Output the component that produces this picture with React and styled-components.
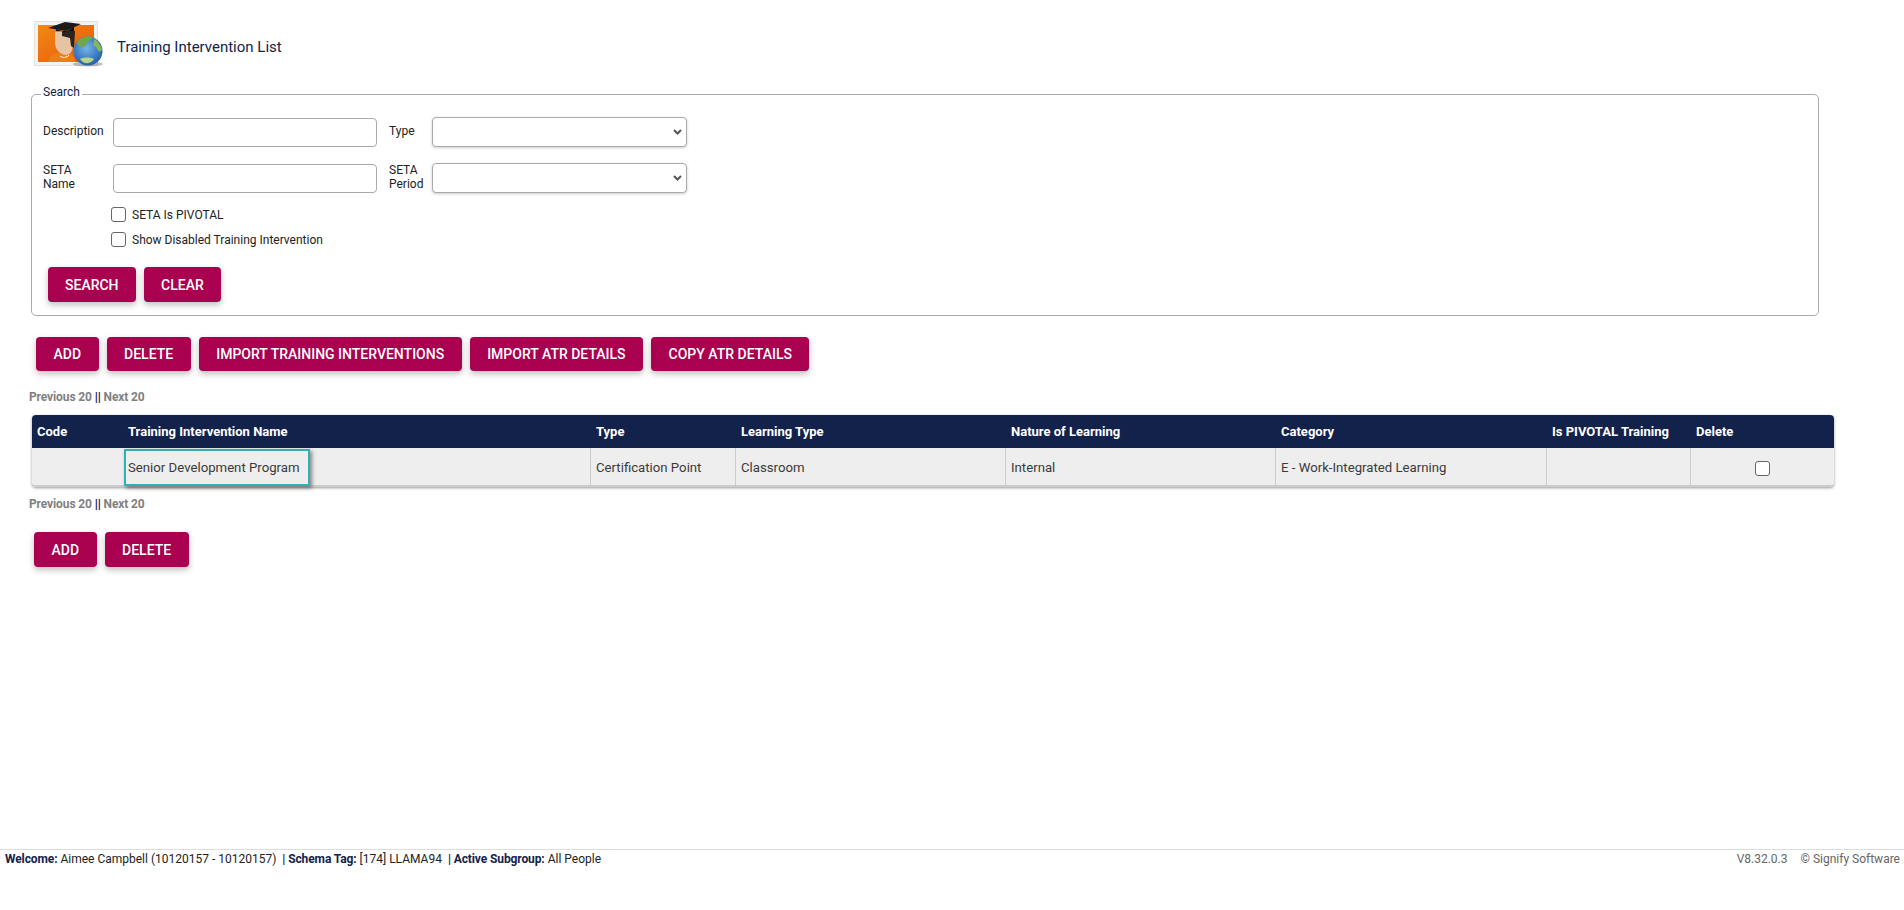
import styled, { createGlobalStyle } from "styled-components";

const GlobalStyle = createGlobalStyle`
  html, body {
    margin: 0;
    padding: 0;
    background: #fff;
    font-family: Roboto, "Liberation Sans", sans-serif;
    font-size: 12px;
    color: #222;
  }
`;

const Page = styled.div`
  min-height: 868px;
  display: flex;
  flex-direction: column;
  box-sizing: border-box;
`;

const Header = styled.div`
  display: flex;
  align-items: center;
  gap: 13px;
  padding: 20px 0 0 34px;
  height: 47px;
`;

const Title = styled.span`
  padding-top: 7px;
  font-size: 15px;
  color: #13224b;
`;

const SearchBox = styled.fieldset`
  box-sizing: border-box;
  width: 1788px;
  height: 231px;
  margin: 18px 0 0 31px;
  padding: 14px 11px 0;
  border: 1px solid #aaa;
  border-radius: 5px;
`;

const SearchLegend = styled.legend`
  padding: 0 2px 4px;
  margin-left: -2px;
  line-height: 14px;
  color: #13224b;
`;

const FieldRow = styled.div`
  display: grid;
  grid-template-columns: 70px 264px 12px 43px 255px;
  align-items: center;
  height: 30px;
  margin-bottom: ${(props) => props.$gap}px;
`;

const FieldLabel = styled.label`
  grid-column: ${(props) => props.$column};
  padding-bottom: 2px;
  line-height: 14px;
  color: #222;
`;

const TextInput = styled.input`
  box-sizing: border-box;
  height: 29px;
  width: 264px;
  border: 1px solid #aaa;
  border-radius: 4px;
  background: #fff;
`;

const SelectInput = styled.select`
  grid-column: 5;
  box-sizing: border-box;
  appearance: none;
  height: 30px;
  width: 255px;
  border: 1px solid #aaa;
  border-radius: 4px;
  background: #fff url("data:image/svg+xml,%3Csvg xmlns='http://www.w3.org/2000/svg' width='9' height='6'%3E%3Cpath d='M1 1l3.5 3.5L8 1' fill='none' stroke='%23555' stroke-width='2'/%3E%3C/svg%3E") no-repeat right 4px center;
  box-shadow: 0 1px 3px rgba(0, 0, 0, 0.2);
`;

const CheckRow = styled.div`
  display: flex;
  align-items: center;
  gap: 6px;
  height: 16px;
  margin: 0 0 9px 68px;

  & > span {
    padding-top: 2px;
  }
`;

const CheckBox = styled.input.attrs({ type: "checkbox" })`
  box-sizing: border-box;
  appearance: none;
  width: 15px;
  height: 15px;
  margin: ${(props) => props.$shift || 0}px 0 0;
  background: #fff;
  border: 1px solid #666;
  border-radius: 3px;
  vertical-align: middle;
`;

const ButtonRow = styled.div`
  display: flex;
  gap: 8px;
  margin: ${(props) => props.$margin};
`;

const Button = styled.button`
  height: ${(props) => (props.$tall ? 35 : 34)}px;
  padding: 0 ${(props) => props.$pad || 17.5}px;
  border: none;
  border-radius: 4px;
  background: #a9004f;
  color: #fff;
  font-family: Roboto, "Liberation Sans", sans-serif;
  font-size: 14px;
  font-weight: 500;
  text-transform: uppercase;
  box-shadow: 0 3px 6px rgba(0, 0, 0, 0.25);
`;

const Pager = styled.div`
  font-weight: 700;
  letter-spacing: -0.11px;
  line-height: 14px;
  color: #808080;
  margin: ${(props) => props.$margin};

  & > b {
    color: #13224b;
  }
`;

const Table = styled.table`
  width: 1802px;
  margin-left: 32px;
  border-collapse: separate;
  border-spacing: 0;
  table-layout: fixed;
  border-radius: 4px;
  box-shadow: 0 1px 3px rgba(0, 0, 0, 0.4);
`;

const HeadCell = styled.th`
  height: 33px;
  padding: 0 5px 0 6px;
  background: #13224b;
  color: #fff;
  font-size: 13px;
  font-weight: 700;
  text-align: left;

  &:nth-child(-n + 2) {
    padding-left: 5px;
  }
  &:first-child {
    border-top-left-radius: 4px;
  }
  &:last-child {
    border-top-right-radius: 4px;
  }
`;

const BodyCell = styled.td`
  box-sizing: border-box;
  height: 39px;
  padding: ${(props) => (props.$flush ? "0 0 0 1px" : "2px 5px 0 5px")};
  background: #eee;
  color: #3a3a3a;
  font-size: 13.2px;
  text-align: ${(props) => (props.$center ? "center" : "left")};
  border-bottom: 2px solid #ccc;
  border-left: ${(props) => (props.$first ? "none" : "1px solid #ccc")};

  &:first-child {
    border-bottom-left-radius: 4px;
  }
  &:last-child {
    border-bottom-right-radius: 4px;
  }
`;

const Highlight = styled.div`
  box-sizing: border-box;
  display: flex;
  align-items: center;
  width: 186px;
  height: 37px;
  margin: 1px 0 -1px;
  padding-left: 2px;
  border: 2px solid #2fb2b5;
  box-shadow: 2px 2px 4px rgba(0, 0, 0, 0.45);
`;

const Footer = styled.div`
  margin-top: auto;
  display: flex;
  justify-content: space-between;
  align-items: center;
  height: 18px;
  padding: 0 4px 0 5px;
  border-top: 1px solid #ddd;
`;

const FooterLeft = styled.div`
  color: #222;

  & > b {
    letter-spacing: -0.1px;
    color: #13224b;
  }
`;

const FooterRight = styled.div`
  display: flex;
  gap: 13px;
  color: #666;
`;

const Logo = () => (
  <svg width="70" height="47" viewBox="0 0 70 47">
    <defs>
      <linearGradient id="bg" x1="0" y1="0" x2="1" y2="1">
        <stop offset="0" stopColor="#f28a12" />
        <stop offset="1" stopColor="#e5560f" />
      </linearGradient>
      <radialGradient id="globe" cx="0.45" cy="0.4" r="0.65">
        <stop offset="0" stopColor="#74b4ea" />
        <stop offset="1" stopColor="#1f5aa6" />
      </radialGradient>
    </defs>
    <rect x="0.5" y="1.5" width="63" height="44" fill="#f5f3f0" stroke="#e2e2e2" />
    <rect x="4" y="5" width="56" height="37" fill="url(#bg)" />
    <path d="M14 42c1-7 6-9 12-10l6 0c4 1 8 3 9 10z" fill="#ef7d16" />
    <path d="M21 12h18v12c0 7-3 11-7 11s-11-4-11-12z" fill="#e6c3a2" />
    <path d="M26 36c2 2 7 2 9-1" stroke="#fff" fill="none" />
    <path d="M28 11h13l-1 17-3-2-1-8-8-2z" fill="#2a2320" />
    <path d="M14 8l17-6 16 2-15 7z" fill="#1a1a1a" />
    <path d="M22 9l9 3 9-5v4H22z" fill="#111" />
    <ellipse cx="54" cy="44" rx="15" ry="2.5" fill="rgba(0,0,0,0.25)" />
    <circle cx="54" cy="31" r="14.5" fill="url(#globe)" />
    <path d="M44 21c4-4 11-6 15-4-1 3-5 3-6 6s-3 5-6 4c-2-1-5-3-3-6z" fill="#6fa84f" />
    <path d="M60 19c4 2 7 6 8 11l-3 2-3-5-3-2 1-3z" fill="#84b85c" />
    <path d="M46 39c4-2 10-2 14 0-3 5-10 6-14 0z" fill="#b9d48a" />
  </svg>
);

const columns = [91, 467, 145, 270, 270, 271, 144, 144];
const headings = [
  "Code",
  "Training Intervention Name",
  "Type",
  "Learning Type",
  "Nature of Learning",
  "Category",
  "Is PIVOTAL Training",
  "Delete",
];

function App() {
  return (
    <Page>
      <GlobalStyle />
      <Header>
        <Logo />
        <Title>Training Intervention List</Title>
      </Header>

      <SearchBox>
        <SearchLegend>Search</SearchLegend>
        <FieldRow $gap={16}>
          <FieldLabel $column={1}>Description</FieldLabel>
          <TextInput />
          <FieldLabel $column={4}>Type</FieldLabel>
          <SelectInput />
        </FieldRow>
        <FieldRow $gap={13}>
          <FieldLabel $column={1}>
            SETA
            <br />
            Name
          </FieldLabel>
          <TextInput />
          <FieldLabel $column={4}>
            SETA
            <br />
            Period
          </FieldLabel>
          <SelectInput />
        </FieldRow>
        <CheckRow>
          <CheckBox />
          <span>SETA Is PIVOTAL</span>
        </CheckRow>
        <CheckRow>
          <CheckBox />
          <span>Show Disabled Training Intervention</span>
        </CheckRow>
        <ButtonRow $margin="20px 0 0 5px">
          <Button $tall $pad={17}>Search</Button>
          <Button $tall>Clear</Button>
        </ButtonRow>
      </SearchBox>

      <ButtonRow $margin="21px 0 0 36px">
        <Button>Add</Button>
        <Button>Delete</Button>
        <Button>Import Training Interventions</Button>
        <Button>Import ATR Details</Button>
        <Button>Copy ATR Details</Button>
      </ButtonRow>

      <Pager $margin="19px 0 11px 29px">
        Previous 20 <b>||</b> Next 20
      </Pager>

      <Table>
        <colgroup>
          {columns.map((width, index) => (
            <col key={index} width={width} />
          ))}
        </colgroup>
        <thead>
          <tr>
            {headings.map((heading) => (
              <HeadCell key={heading}>{heading}</HeadCell>
            ))}
          </tr>
        </thead>
        <tbody>
          <tr>
            <BodyCell $first />
            <BodyCell $first $flush>
              <Highlight>Senior Development Program</Highlight>
            </BodyCell>
            <BodyCell>Certification Point</BodyCell>
            <BodyCell>Classroom</BodyCell>
            <BodyCell>Internal</BodyCell>
            <BodyCell>E - Work-Integrated Learning</BodyCell>
            <BodyCell />
            <BodyCell $center>
              <CheckBox $shift={2} />
            </BodyCell>
          </tr>
        </tbody>
      </Table>

      <Pager $margin="10px 0 0 29px">
        Previous 20 <b>||</b> Next 20
      </Pager>

      <ButtonRow $margin="21px 0 0 34px">
        <Button $tall>Add</Button>
        <Button $tall>Delete</Button>
      </ButtonRow>

      <Footer>
        <FooterLeft>
          <b>Welcome:</b> Aimee Campbell (10120157 - 10120157) &nbsp;<b>| Schema Tag:</b> [174] LLAMA94 &nbsp;<b>| Active Subgroup:</b> All People
        </FooterLeft>
        <FooterRight>
          <span>V8.32.0.3</span>
          <span>© Signify Software</span>
        </FooterRight>
      </Footer>
    </Page>
  );
}

export default App;
